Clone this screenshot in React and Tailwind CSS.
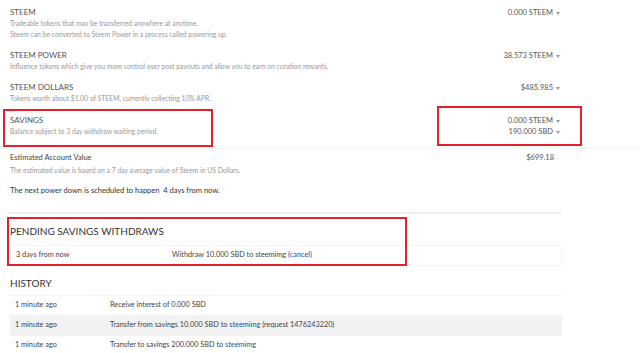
import React from "react";

const Caret = () => (
  <span className="ml-[3px] inline-block h-0 w-0 border-x-[2.5px] border-t-[3px] border-x-transparent border-t-[#999] align-middle" />
);

function Balance({ title, desc, values, h }) {
  return (
    <div className={`flex justify-between ${h}`}>
      <div>
        <div className="text-[8px] leading-[11px] text-[#555]">{title}</div>
        {desc.map((d) => (
          <div key={d} className="text-[6.8px] leading-[11px] text-[#999]">
            {d}
          </div>
        ))}
      </div>
      <div className="flex flex-col items-end">
        {values.map((v) => (
          <div key={v} className="text-[7.5px] leading-[11px] text-[#555]">
            {v}
            <Caret />
          </div>
        ))}
      </div>
    </div>
  );
}

const history = [
  { when: "1 minute ago", what: <>Receive interest of 0.000 SBD</> },
  {
    when: "1 minute ago",
    what: (
      <>
        Transfer from savings 10.000 SBD to <a className="text-[#1a5099]">steemimg</a> (request 1476243220)
      </>
    ),
  },
  {
    when: "1 minute ago",
    what: (
      <>
        Transfer to savings 200.000 SBD to <a className="text-[#1a5099]">steemimg</a>
      </>
    ),
  },
];

export default function App() {
  return (
    <div className="relative h-[353px] w-[640px] overflow-hidden bg-white font-['Lato',sans-serif]">
      <div className="w-[560px] pl-[10px] pt-[7px]">
        <Balance
          h="h-[43px]"
          title="STEEM"
          desc={[
            "Tradeable tokens that may be transferred anywhere at anytime.",
            "Steem can be converted to Steem Power in a process called powering up.",
          ]}
          values={["0.000 STEEM"]}
        />
        <Balance
          h="h-[32px]"
          title="STEEM POWER"
          desc={[
            "Influence tokens which give you more control over post payouts and allow you to earn on curation rewards.",
          ]}
          values={["38.573 STEEM"]}
        />
        <Balance
          h="h-[33px]"
          title="STEEM DOLLARS"
          desc={["Tokens worth about $1.00 of STEEM, currently collecting 10% APR."]}
          values={["$485.985"]}
        />
        <Balance
          h="h-[33px]"
          title="SAVINGS"
          desc={["Balance subject to 3 day withdraw waiting period."]}
          values={["0.000 STEEM", "190.000 SBD"]}
        />
      </div>
      <div className="h-px w-full bg-[#f2f2f2]" />
      <div className="w-[560px] pl-[10px] pt-[3px]">
        <div className="flex justify-between">
          <div>
            <div className="text-[7.5px] leading-[11px] text-[#444]">Estimated Account Value</div>
            <div className="mt-[2px] text-[6.8px] leading-[11px] text-[#999]">
              The estimated value is based on a 7 day average value of Steem in US Dollars.
            </div>
          </div>
          <div className="pr-[6px] text-[7.5px] leading-[11px] text-[#555]">$699.18</div>
        </div>
        <div className="mt-[9px] text-[7.5px] leading-[11px] text-[#333]">
          The next power down is scheduled to happen&nbsp; 4 days from now.
        </div>
      </div>

      <div className="ml-[7px] mt-[16px] h-[2px] w-[555px] bg-[#f0f0f0]" />

      <div className="w-[562px] pl-[10px]">
        <div className="mt-[9px] text-[10px] leading-[16px] text-[#333]">PENDING SAVINGS WITHDRAWS</div>
        <div className="mt-[6px] flex h-[21px] items-center border border-[#f5f5f5] text-[7.3px] text-[#444]">
          <div className="w-[161px] pl-[5px]">3 days from now</div>
          <div>
            Withdraw 10.000 SBD to steemimg <a className="text-[#1a5099]">(cancel)</a>
          </div>
        </div>

        <div className="mt-[9px] text-[10px] leading-[16px] text-[#333]">HISTORY</div>
        <div className="mt-[4px]">
          {history.map((r, i) => (
            <div
              key={i}
              className={`flex h-[20px] items-center border-t border-[#f2f2f2] text-[7.3px] text-[#444] ${
                i === 1 ? "bg-[#f2f2f2]" : ""
              }`}
            >
              <div className="w-[100px] pl-[5px]">{r.when}</div>
              <div>{r.what}</div>
            </div>
          ))}
        </div>
      </div>

      <div className="absolute left-[3px] top-[109px] h-[38px] w-[210px] border-2 border-[#e3212b]" />
      <div className="absolute left-[437px] top-[106px] h-[40px] w-[145px] border-2 border-[#e3212b]" />
      <div className="absolute left-[7px] top-[217px] h-[49px] w-[400px] border-2 border-[#e3212b]" />
    </div>
  );
}
